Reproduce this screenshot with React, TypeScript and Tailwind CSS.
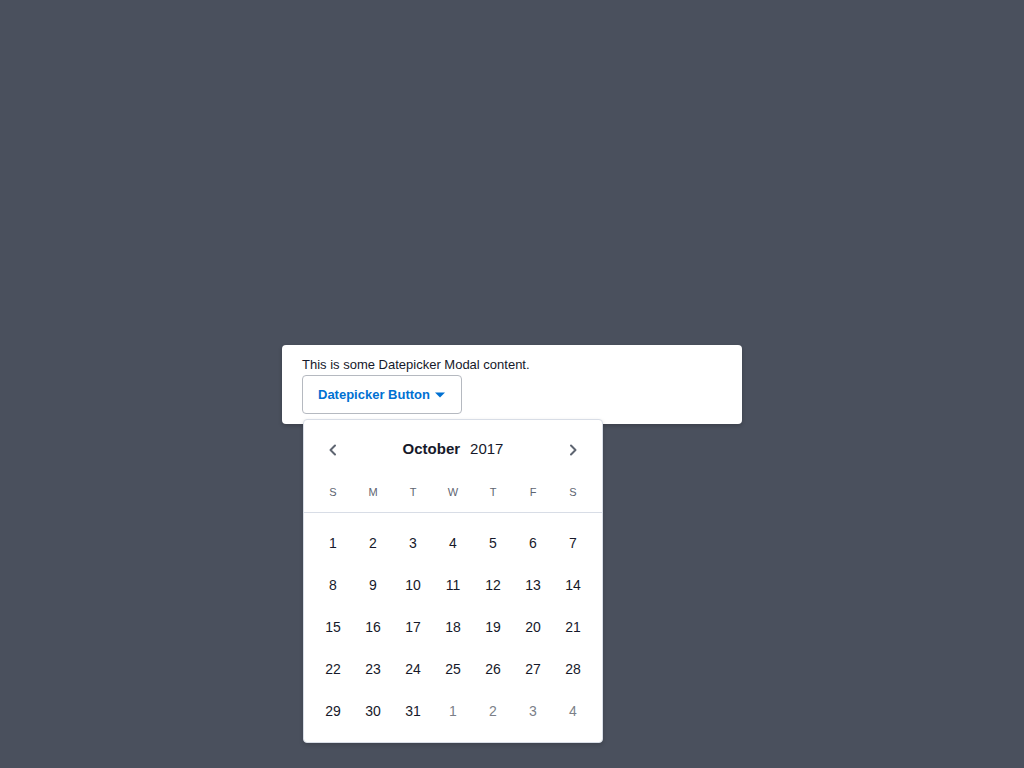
import React from "react";

const weekdays = ["S", "M", "T", "W", "T", "F", "S"];

function Chevron({ dir }: { dir: "left" | "right" }) {
  return (
    <svg width="14" height="14" viewBox="0 0 14 14" fill="none">
      {dir === "left" ? (
        <polyline points="9,2.5 4.5,7 9,11.5" stroke="#5e6571" strokeWidth="2" strokeLinecap="round" strokeLinejoin="round" />
      ) : (
        <polyline points="5,2.5 9.5,7 5,11.5" stroke="#5e6571" strokeWidth="2" strokeLinecap="round" strokeLinejoin="round" />
      )}
    </svg>
  );
}

export default function App() {
  const days: { n: number; out: boolean }[] = [];
  for (let i = 1; i <= 31; i++) days.push({ n: i, out: false });
  for (let i = 1; i <= 4; i++) days.push({ n: i, out: true });

  return (
    <div
      className="flex h-screen w-full items-center justify-center bg-[#4a505d]"
      style={{ fontFamily: '"Liberation Sans", Arial, sans-serif' }}
    >
      <div className="w-[460px] rounded-[4px] bg-white px-[20px] py-[10px] shadow-[0_2px_4px_rgba(0,0,0,0.2)]">
        <div className="h-[20px] text-[13px] leading-[20px] text-[#16192a]">
          This is some Datepicker Modal content.
        </div>
        <div className="relative w-[160px]">
          <button className="flex h-[39px] w-[160px] items-center rounded-[4px] border border-[#b5b9c0] bg-white px-[15px] pt-[1px] text-[13px] font-bold text-[#0070d2]">
            <span>Datepicker Button</span>
            <svg className="ml-[5px]" width="10" height="6" viewBox="0 0 10 6">
              <polygon points="0,0.5 10,0.5 5,5.5" fill="#0070d2" />
            </svg>
          </button>
          <div className="absolute left-[1px] top-[44px] z-10 w-[300px] rounded-[4px] border border-[#d8dde6] bg-white pb-[9px] pt-[10px] shadow-[0_2px_4px_rgba(0,0,0,0.16)]">
            <div className="flex h-[40px] items-center justify-between px-[9px]">
              <div className="flex w-[40px] justify-center">
                <Chevron dir="left" />
              </div>
              <div className="flex items-center gap-[10px] text-[15px] text-[#16192a]">
                <span className="font-bold">October</span>
                <span>2017</span>
              </div>
              <div className="flex w-[40px] justify-center">
                <Chevron dir="right" />
              </div>
            </div>
            <div className="mt-[3px] grid h-[40px] grid-cols-7 items-center border-b border-[#d8dde6] px-[9px] text-[11px] text-[#5e6571]">
              {weekdays.map((d, i) => (
                <div key={i} className="text-center">
                  {d}
                </div>
              ))}
            </div>
            <div className="grid grid-cols-7 px-[9px] pt-[10px]">
              {days.map((d, i) => (
                <div
                  key={i}
                  className={`flex h-[42px] items-center justify-center text-[14px] ${
                    d.out ? "text-[#7b7f88]" : "text-[#16192a]"
                  }`}
                >
                  {d.n}
                </div>
              ))}
            </div>
          </div>
        </div>
      </div>
    </div>
  );
}
